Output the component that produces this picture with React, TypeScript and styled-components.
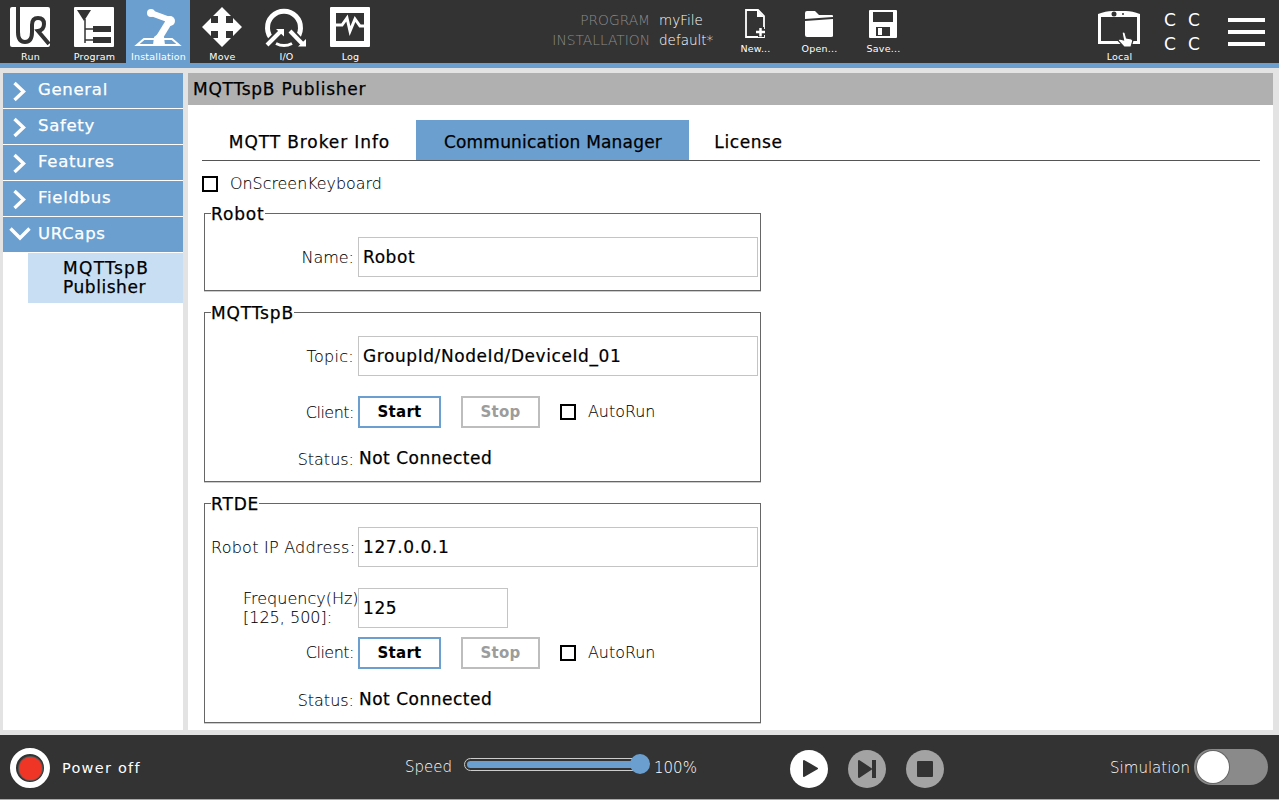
import React from 'react';
import styled, { createGlobalStyle } from 'styled-components';

const DARK = '#333333';
const BLUE = '#6a9fd0';

const GlobalStyle = createGlobalStyle`
  html, body { margin: 0; padding: 0; background: #e3e3e3; }
  * { box-sizing: border-box; }
  body { font-family: "DejaVu Sans", sans-serif; color: #000; }
`;

const Page = styled.div`
  width: 1279px;
  height: 800px;
  display: flex;
  flex-direction: column;
  overflow: hidden;
  background: #e3e3e3;
`;

// Header
const TopBar = styled.header`
  height: 68px;
  flex: none;
  display: flex;
  background: ${DARK};
  border-bottom: 5px solid ${BLUE};
`;

const NavGroup = styled.nav`
  display: flex;
  margin-left: -2px;
`;

const NavButton = styled.div<{ $active?: boolean; $top?: number }>`
  width: 64px;
  height: 63px;
  padding-top: ${({ $top }) => $top ?? 7}px;
  display: flex;
  flex-direction: column;
  align-items: center;
  background: ${({ $active }) => ($active ? BLUE : 'transparent')};
  svg { display: block; flex: none; overflow: visible; }
`;

const IconLabel = styled.span`
  margin: 4px 0 0 1px;
  font-size: 9.5px;
  line-height: 12px;
  letter-spacing: 0.2px;
  color: #fff;
  white-space: nowrap;
`;

const FileInfo = styled.div`
  width: 341px;
  display: grid;
  grid-template-columns: 268px auto;
  grid-auto-rows: 20px;
  column-gap: 9px;
  align-content: start;
  padding-top: 10px;
  line-height: 20px;
  font-weight: 200;
`;

const InfoLabel = styled.span`
  text-align: right;
  font-size: 13.8px;
  color: #8c8c8c;
`;

const InfoValue = styled.span`
  font-size: 13.5px;
  color: #fff;
`;

const FileButtons = styled.div`
  display: flex;
`;

const Spacer = styled.div`
  flex: 1;
`;

const CounterGrid = styled.div`
  display: grid;
  grid-template-columns: 24px 24px;
  grid-auto-rows: 24px;
  justify-items: center;
  align-items: center;
  margin: 8px 0 0 7px;
  height: 48px;
  font-size: 17px;
  color: #fff;
`;

const Hamburger = styled.div`
  width: 37px;
  height: 28px;
  margin: 18px 14px 0 22px;
  display: flex;
  flex-direction: column;
  justify-content: space-between;
  span { display: block; height: 4px; background: #fff; }
`;

// Body
const Body = styled.div`
  flex: 1;
  display: flex;
  padding: 5px 6px 5px 3px;
  gap: 5px;
  min-height: 0;
`;

const Sidebar = styled.aside`
  width: 180px;
  background: #fff;
  display: flex;
  flex-direction: column;
  gap: 1px;
`;

const SideItem = styled.div`
  height: 35px;
  flex: none;
  display: flex;
  align-items: center;
  padding: 0 0 2px 35px;
  position: relative;
  background: ${BLUE};
  color: #fff;
  font-size: 16.5px;
  letter-spacing: 0.7px;
  -webkit-text-stroke: 0.25px #fff;
  svg { position: absolute; left: 0; top: 0; }
`;

const SubItem = styled.div`
  margin-left: 25px;
  height: 50px;
  padding: 6px 0 0 35px;
  background: #c8dff3;
  font-size: 17px;
  line-height: 19px;
  -webkit-text-stroke: 0.25px #000;
`;

const SubLine = styled.span<{ $track: number }>`
  display: block;
  letter-spacing: ${({ $track }) => $track}px;
`;

const Content = styled.main`
  flex: 1;
  background: #fff;
  display: flex;
  flex-direction: column;
`;

const TitleBar = styled.div`
  height: 32px;
  flex: none;
  background: #b0b0b0;
  padding: 1px 0 0 5px;
  font-size: 17px;
  line-height: 31px;
  letter-spacing: 0.75px;
  -webkit-text-stroke: 0.25px #000;
`;

const TabBar = styled.div`
  margin: 15px 13px 0 14px;
  height: 41px;
  display: flex;
  border-bottom: 1px solid #555;
`;

const Tab = styled.div<{ $active?: boolean; $w: number; $track: number }>`
  width: ${({ $w }) => $w}px;
  height: 40px;
  padding: 4px 0 0 1px;
  display: flex;
  align-items: center;
  justify-content: center;
  background: ${({ $active }) => ($active ? BLUE : 'transparent')};
  font-size: 17px;
  letter-spacing: ${({ $track }) => $track}px;
  -webkit-text-stroke: 0.25px #000;
`;

const KeyboardRow = styled.div`
  margin: 14px 0 0 14px;
  height: 18px;
  display: flex;
  align-items: center;
`;

const CheckBox = styled.span`
  width: 16px;
  height: 16px;
  flex: none;
  border: 2px solid #000;
  background: #fff;
`;

const CheckLabel = styled.span`
  margin: 0 0 1px 12px;
  font-size: 15.9px;
  font-weight: 200;
  -webkit-text-stroke: 0.1px #000;
`;

const Groups = styled.div`
  margin: 9px 0 0 16px;
  width: 557px;
  display: flex;
  flex-direction: column;
  gap: 10px;
`;

const Group = styled.fieldset<{ $h: number }>`
  margin: 0;
  padding: 0 2px 0 6px;
  height: ${({ $h }) => $h}px;
  border: 1px solid #666;
  box-shadow: 0 1px 0 #ccc;
  min-width: 0;
`;

const GroupTitle = styled.legend`
  padding: 3px 0 1px;
  font-size: 17px;
  line-height: 18px;
  letter-spacing: 0.85px;
  -webkit-text-stroke: 0.25px #000;
`;

const Row = styled.div<{ $top: number; $h: number }>`
  margin-top: ${({ $top }) => $top}px;
  height: ${({ $h }) => $h}px;
  display: grid;
  grid-template-columns: 143px 1fr;
  column-gap: 4px;
  align-items: center;
`;

const FieldLabel = styled.span<{ $track?: number }>`
  text-align: right;
  font-size: 16px;
  line-height: 19px;
  font-weight: 200;
  letter-spacing: ${({ $track }) => $track ?? 0}px;
  white-space: nowrap;
  -webkit-text-stroke: 0.1px #000;
`;

const WrappedLabel = styled(FieldLabel)`
  justify-self: start;
  margin-left: 32px;
  text-align: left;
`;

const TextField = styled.div<{ $w?: number }>`
  width: ${({ $w }) => ($w ? `${$w}px` : '100%')};
  height: 40px;
  border: 1px solid #c4c4c4;
  padding-left: 4px;
  font-size: 17px;
  line-height: 38px;
  letter-spacing: 0.58px;
  -webkit-text-stroke: 0.2px #000;
`;

const Controls = styled.div`
  display: flex;
  align-items: center;
`;

const ActionButton = styled.div<{ $disabled?: boolean }>`
  width: ${({ $disabled }) => ($disabled ? 79 : 83)}px;
  height: 32px;
  margin-right: 20px;
  display: flex;
  align-items: center;
  justify-content: center;
  border: 2px solid ${({ $disabled }) => ($disabled ? '#bdbdbd' : BLUE)};
  color: ${({ $disabled }) => ($disabled ? '#9c9c9c' : '#000')};
  font-size: 15px;
  font-weight: 700;
  letter-spacing: 0.3px;
`;

const StatusText = styled.span`
  font-size: 17px;
  letter-spacing: 0.5px;
  -webkit-text-stroke: 0.25px #000;
  margin: 0 0 2px 1px;
`;

// Footer
const BottomBar = styled.footer`
  height: 65px;
  flex: none;
  padding-top: 2px;
  background: ${DARK};
  border-bottom: 1px solid #aaa;
  display: flex;
  align-items: center;
`;

const PowerButton = styled.div`
  width: 40px;
  height: 40px;
  margin-left: 10px;
  border-radius: 50%;
  background: ${DARK};
  border: 6px solid #fff;
  display: flex;
  align-items: center;
  justify-content: center;
  span {
    width: 23px;
    height: 23px;
    border-radius: 50%;
    background: #ef3526;
    box-shadow: 0 0 0 1px #555;
    flex: none;
  }
`;

const PowerLabel = styled.span`
  margin-left: 12px;
  width: 343px;
  font-size: 14.5px;
  letter-spacing: 1.25px;
  color: #fff;
`;

const SpeedLabel = styled.span`
  font-size: 15px;
  font-weight: 200;
  color: #fff;
  width: 59px;
  margin-bottom: 3px;
`;

const SliderTrack = styled.div`
  width: 177px;
  height: 13px;
  margin-bottom: 7px;
  border: 1px solid #ccc;
  border-radius: 7px;
  padding: 2px;
  position: relative;
`;

const SliderFill = styled.div`
  height: 100%;
  background: ${BLUE};
  border-radius: 4px;
`;

const SliderThumb = styled.span`
  position: absolute;
  right: -10px;
  top: -5px;
  width: 20px;
  height: 20px;
  border-radius: 50%;
  background: ${BLUE};
`;

const SpeedValue = styled(SpeedLabel)`
  margin: 0 0 1px 13px;
  width: 136px;
`;

const RoundButton = styled.div<{ $off?: boolean }>`
  width: 38px;
  height: 38px;
  margin: 2px 20px 0 0;
  border-radius: 50%;
  background: ${({ $off }) => ($off ? '#a3a3a3' : '#fff')};
  display: flex;
  align-items: center;
  justify-content: center;
`;

const SimLabel = styled.span`
  font-size: 15px;
  font-weight: 200;
  color: #fff;
  margin: 0 4px 1px auto;
`;

const Toggle = styled.div`
  width: 74px;
  height: 36px;
  margin: 0 11px 2px 0;
  border-radius: 18px;
  background: #8a8a8a;
  padding: 2px 0 0 3px;
  span {
    display: block;
    width: 32px;
    height: 32px;
    border-radius: 50%;
    background: #fff;
    box-shadow: 0 0 0 1px #666;
  }
`;

// Icons
const RunIcon = () => (
  <svg width="40" height="40" viewBox="0 0 40 40">
    <rect width="40" height="40" rx="2" fill="#fff" />
    <path
      d="M8 0V25Q8 35 15 35Q22 35 22 25V18Q22 11 28 11Q34 11 34 17Q34 23 28 24L39 37"
      fill="none"
      stroke={DARK}
      strokeWidth="4"
    />
  </svg>
);

const ProgramIcon = () => (
  <svg width="40" height="40" viewBox="0 0 40 40">
    <rect width="40" height="40" rx="1" fill="#fff" />
    <path d="M3 3h14l-7 11z" fill={DARK} />
    <path d="M11 12v24M11 22h8M11 33h8" stroke={DARK} strokeWidth="1.5" fill="none" />
    <rect x="19" y="19" width="18" height="6" fill={DARK} />
    <rect x="19" y="30" width="18" height="6" fill={DARK} />
  </svg>
);

const InstallIcon = () => (
  <svg width="48" height="40" viewBox="0 0 48 40">
    <path d="M17 6L36 13" stroke="#fff" strokeWidth="6" strokeLinecap="round" />
    <path d="M36 13L25 31" stroke="#fff" strokeWidth="7" />
    <circle cx="17" cy="6" r="4" fill="#fff" />
    <circle cx="36" cy="14" r="5" fill="#fff" />
    <path d="M10 32H38L45 38H3z" fill="none" stroke="#fff" strokeWidth="2" />
    <path d="M19 38l1-8 4-3h3l3 3 1 8z" fill="#fff" />
  </svg>
);

const MoveIcon = () => (
  <svg width="40" height="40" viewBox="0 0 40 40">
    <path
      d="M20 0l9 9h-5v7h7v-5l9 9-9 9v-5h-7v7h5l-9 9-9-9h5v-7H9v5l-9-9 9-9v5h7V9h-5z"
      fill="#fff"
    />
  </svg>
);

const IoIcon = () => (
  <svg width="42" height="40" viewBox="0 0 42 40">
    <path d="M8 33A16.5 16.5 0 1 1 30 33" fill="none" stroke="#fff" strokeWidth="5" />
    <path d="M11 36.5a17.5 17.5 0 0 0 16 0" fill="none" stroke="#fff" strokeWidth="3" />
    <path d="M2 38L16 24" stroke={DARK} strokeWidth="8" />
    <path d="M38 38L25 24" stroke={DARK} strokeWidth="8" />
    <path d="M2 38L16 24" stroke="#fff" strokeWidth="4" />
    <path d="M11 22h8v7.5z" fill="#fff" />
    <path d="M25 24L38 37.5" stroke="#fff" strokeWidth="4" />
    <path d="M41 39.5h-8l8-7.5z" fill="#fff" />
  </svg>
);

const LogIcon = () => (
  <svg width="40" height="40" viewBox="0 0 40 40">
    <rect width="40" height="40" rx="1" fill="#fff" />
    <rect x="6" y="6" width="28" height="28" fill={DARK} />
    <path d="M6 18h6l5-7 3 13 5-12 5 7h4" fill="none" stroke="#fff" strokeWidth="3" />
  </svg>
);

const NewIcon = () => (
  <svg width="22" height="30" viewBox="0 0 22 30">
    <path d="M2 1h12l6 6v21H2z" fill="none" stroke="#fff" strokeWidth="1.8" />
    <path d="M13 1l7 7h-7z" fill="#fff" />
    <path d="M12 23h10M17 18v10" stroke={DARK} strokeWidth="6" />
    <path d="M12 23h9M16.5 19v8.5" stroke="#fff" strokeWidth="2.5" />
  </svg>
);

const OpenIcon = () => (
  <svg width="30" height="30" viewBox="0 0 30 30">
    <path d="M1 4q0-2 2-2h8l4 4h13q1 0 1 1v1l-28 2z" fill="#fff" />
    <path d="M1 12l28-2v17q0 1-2 1H3q-2 0-2-2z" fill="#fff" />
  </svg>
);

const SaveIcon = () => (
  <svg width="30" height="30" viewBox="0 0 30 30">
    <path d="M2 1h26q1 0 1 1v26q0 1-1 1H2q-1 0-1-1V2q0-1 1-1z" fill="#fff" />
    <rect x="5" y="3" width="20" height="10" fill={DARK} />
    <rect x="8" y="18" width="14" height="9" fill={DARK} />
    <rect x="10" y="19" width="4" height="7" fill="#fff" />
  </svg>
);

const LocalIcon = () => (
  <svg width="44" height="40" viewBox="0 0 44 40">
    <path d="M1 7q8-3 14-3h14q6 0 14 3v3H1z" fill="#fff" />
    <path d="M2.500 8v27.500h39V8" fill="none" stroke="#fff" strokeWidth="3" />
    <circle cx="17" cy="7" r="2.500" fill={DARK} />
    <circle cx="26" cy="7" r="1" fill={DARK} />
    <path
      d="M25 25.500q1.500-1 3 0l1.500 5.500 5 1q2 1 1 3l-1.500 5h-7l-5.500-6q-.5-2 1.500-2l3.500 1z"
      fill="#fff"
      stroke={DARK}
      strokeWidth="1.200"
    />
  </svg>
);

const Chevron = ({ open }: { open?: boolean }) => (
  <svg width="35" height="35" viewBox="0 0 35 35">
    {open ? (
      <path d="M7.500 11.500l9.500 9.500 9.500-9.500" fill="none" stroke="#fff" strokeWidth="3.400" />
    ) : (
      <path d="M11.500 10l9 8.500-9 8.500" fill="none" stroke="#fff" strokeWidth="3.400" />
    )}
  </svg>
);

const PlayIcon = () => (
  <svg width="38" height="38" viewBox="0 0 38 38">
    <path d="M14 11L27 18.500L14 26z" fill="#333" stroke="#333" strokeWidth="2" strokeLinejoin="round" />
  </svg>
);

const StepIcon = () => (
  <svg width="38" height="38" viewBox="0 0 38 38">
    <path d="M11 11L23 19L11 27z" fill="#333" stroke="#333" strokeWidth="2" strokeLinejoin="round" />
    <rect x="24" y="10" width="4" height="18" fill="#333" />
  </svg>
);

const StopIcon = () => (
  <svg width="38" height="38" viewBox="0 0 38 38">
    <rect x="11" y="11" width="16" height="16" rx="1" fill="#333" />
  </svg>
);

const ClientControls = () => (
  <Controls>
    <ActionButton>Start</ActionButton>
    <ActionButton $disabled>Stop</ActionButton>
    <CheckBox />
    <CheckLabel>AutoRun</CheckLabel>
  </Controls>
);

const sideItems = ['General', 'Safety', 'Features', 'Fieldbus'];

export default function App() {
  return (
    <Page>
      <GlobalStyle />
      <TopBar>
        <NavGroup>
          <NavButton><RunIcon /><IconLabel>Run</IconLabel></NavButton>
          <NavButton><ProgramIcon /><IconLabel>Program</IconLabel></NavButton>
          <NavButton $active><InstallIcon /><IconLabel>Installation</IconLabel></NavButton>
          <NavButton><MoveIcon /><IconLabel>Move</IconLabel></NavButton>
          <NavButton><IoIcon /><IconLabel>I/O</IconLabel></NavButton>
          <NavButton><LogIcon /><IconLabel>Log</IconLabel></NavButton>
        </NavGroup>
        <FileInfo>
          <InfoLabel>PROGRAM</InfoLabel>
          <InfoValue>myFile</InfoValue>
          <InfoLabel>INSTALLATION</InfoLabel>
          <InfoValue>default*</InfoValue>
        </FileInfo>
        <FileButtons>
          <NavButton $top={9}><NewIcon /><IconLabel>New...</IconLabel></NavButton>
          <NavButton $top={9}><OpenIcon /><IconLabel>Open...</IconLabel></NavButton>
          <NavButton $top={9}><SaveIcon /><IconLabel>Save...</IconLabel></NavButton>
        </FileButtons>
        <Spacer />
        <NavButton><LocalIcon /><IconLabel>Local</IconLabel></NavButton>
        <CounterGrid>
          <span>C</span><span>C</span><span>C</span><span>C</span>
        </CounterGrid>
        <Hamburger><span /><span /><span /></Hamburger>
      </TopBar>

      <Body>
        <Sidebar>
          {sideItems.map((label) => (
            <SideItem key={label}><Chevron />{label}</SideItem>
          ))}
          <SideItem><Chevron open />URCaps</SideItem>
          <SubItem>
            <SubLine $track={1.3}>MQTTspB</SubLine>
            <SubLine $track={0.55}>Publisher</SubLine>
          </SubItem>
        </Sidebar>

        <Content>
          <TitleBar>MQTTspB Publisher</TitleBar>
          <TabBar>
            <Tab $w={214} $track={0.9}>MQTT Broker Info</Tab>
            <Tab $w={273} $track={0.2} $active>Communication Manager</Tab>
            <Tab $w={118} $track={0.6}>License</Tab>
          </TabBar>
          <KeyboardRow>
            <CheckBox />
            <CheckLabel>OnScreenKeyboard</CheckLabel>
          </KeyboardRow>
          <Groups>
            <Group $h={89}>
              <GroupTitle>Robot</GroupTitle>
              <Row $top={13} $h={40}>
                <FieldLabel>Name:</FieldLabel>
                <TextField>Robot</TextField>
              </Row>
            </Group>
            <Group $h={181}>
              <GroupTitle>MQTTspB</GroupTitle>
              <Row $top={13} $h={40}>
                <FieldLabel $track={0.3}>Topic:</FieldLabel>
                <TextField>GroupId/NodeId/DeviceId_01</TextField>
              </Row>
              <Row $top={20} $h={32}>
                <FieldLabel $track={-0.5}>Client:</FieldLabel>
                <ClientControls />
              </Row>
              <Row $top={15} $h={32}>
                <FieldLabel>Status:</FieldLabel>
                <StatusText>Not Connected</StatusText>
              </Row>
            </Group>
            <Group $h={231}>
              <GroupTitle>RTDE</GroupTitle>
              <Row $top={13} $h={40}>
                <FieldLabel $track={0.25}>Robot IP Address:</FieldLabel>
                <TextField>127.0.0.1</TextField>
              </Row>
              <Row $top={21} $h={40}>
                <WrappedLabel>Frequency(Hz)<br />[125, 500]:</WrappedLabel>
                <TextField $w={150}>125</TextField>
              </Row>
              <Row $top={8} $h={33}>
                <FieldLabel $track={-0.5}>Client:</FieldLabel>
                <ClientControls />
              </Row>
              <Row $top={15} $h={32}>
                <FieldLabel>Status:</FieldLabel>
                <StatusText>Not Connected</StatusText>
              </Row>
            </Group>
          </Groups>
        </Content>
      </Body>

      <BottomBar>
        <PowerButton><span /></PowerButton>
        <PowerLabel>Power off</PowerLabel>
        <SpeedLabel>Speed</SpeedLabel>
        <SliderTrack>
          <SliderFill />
          <SliderThumb />
        </SliderTrack>
        <SpeedValue>100%</SpeedValue>
        <RoundButton><PlayIcon /></RoundButton>
        <RoundButton $off><StepIcon /></RoundButton>
        <RoundButton $off><StopIcon /></RoundButton>
        <SimLabel>Simulation</SimLabel>
        <Toggle><span /></Toggle>
      </BottomBar>
    </Page>
  );
}
